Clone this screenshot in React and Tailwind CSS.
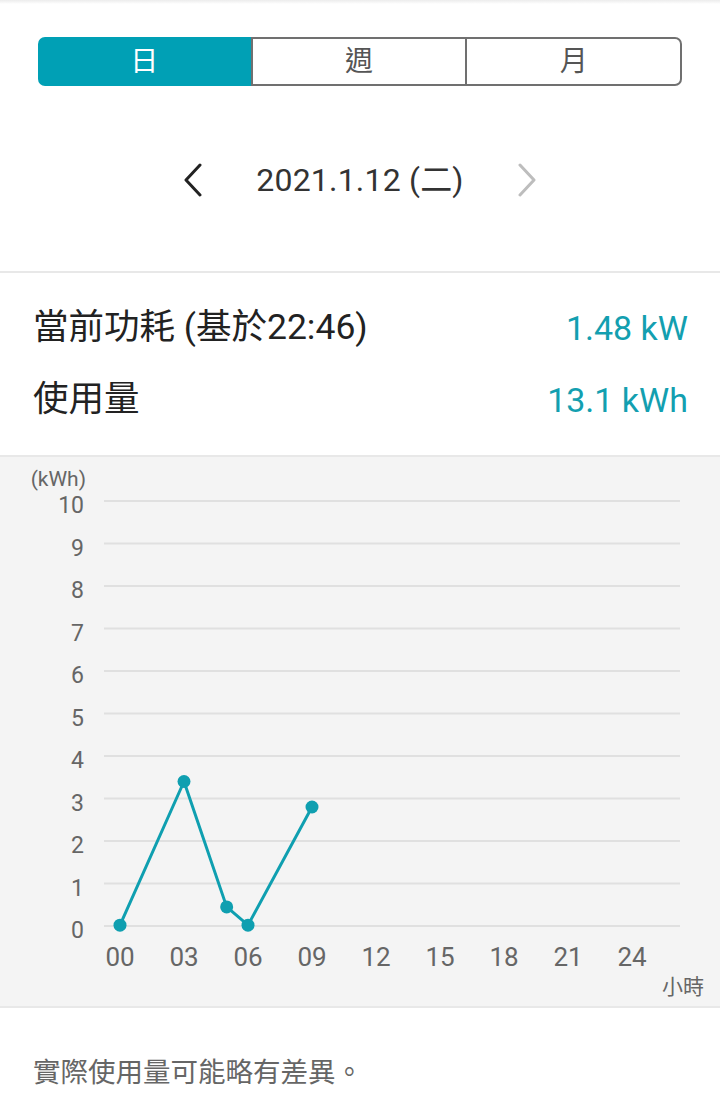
import React from 'react';

const TEAL = '#0f9fb0';

const points = [
  { h: 0, v: 0.02 },
  { h: 3, v: 3.4 },
  { h: 5, v: 0.45 },
  { h: 6, v: 0.02 },
  { h: 9, v: 2.8 },
];

const Chevron = ({ dir, color }) => (
  <svg width="22" height="34" viewBox="0 0 22 34" fill="none">
    <path
      d={dir === 'left' ? 'M18 2 L4 17 L18 32' : 'M4 2 L18 17 L4 32'}
      stroke={color}
      strokeWidth="3"
      strokeLinecap="round"
      strokeLinejoin="round"
    />
  </svg>
);

const UsageChart = () => {
  const top = 44;
  const step = 42.5;
  const y = (v) => top + (10 - v) * step;
  const x = (h) => 120 + (h * 64) / 3;
  const ticks = [10, 9, 8, 7, 6, 5, 4, 3, 2, 1, 0];
  const hours = ['00', '03', '06', '09', '12', '15', '18', '21', '24'];
  const font = "Roboto, 'Noto Sans CJK TC', sans-serif";

  return (
    <svg width="720" height="549" viewBox="0 0 720 549" className="block">
      <text x="86" y="29" textAnchor="end" fontSize="21" fill="#666" fontFamily={font}>
        (kWh)
      </text>
      {ticks.map((t) => (
        <g key={t}>
          <line x1="104" x2="680" y1={y(t)} y2={y(t)} stroke="#e0e0e0" strokeWidth="2" />
          <text x="84" y={y(t) + 12} textAnchor="end" fontSize="23" fill="#666" fontFamily={font}>
            {t}
          </text>
        </g>
      ))}
      {hours.map((h, i) => (
        <text key={h} x={120 + i * 64} y="509" textAnchor="middle" fontSize="26" fill="#666" fontFamily={font}>
          {h}
        </text>
      ))}
      <text x="704" y="537" textAnchor="end" fontSize="21" fill="#666" fontFamily={font}>
        小時
      </text>
      <polyline
        points={points.map((p) => `${x(p.h)},${y(p.v)}`).join(' ')}
        fill="none"
        stroke={TEAL}
        strokeWidth="3"
        strokeLinejoin="round"
      />
      {points.map((p) => (
        <circle key={p.h} cx={x(p.h)} cy={y(p.v)} r="6.5" fill={TEAL} />
      ))}
    </svg>
  );
};

const App = () => {
  return (
    <div
      className="w-[720px] min-h-screen bg-white text-[#222]"
      style={{ fontFamily: "Roboto, 'Noto Sans CJK TC', sans-serif" }}
    >
      {/* top shade */}
      <div className="h-[4px] bg-gradient-to-b from-[#ececec] to-white" />

      {/* period switch */}
      <div className="px-[38px] pt-[33px]">
        <div className="flex h-[49px] text-[28px]">
          <div className="flex-1 flex items-center justify-center bg-[#00a0b5] text-white rounded-l-[7px]">日</div>
          <div className="flex-1 flex items-center justify-center border-2 border-[#707070] text-[#555]">週</div>
          <div className="flex-1 flex items-center justify-center border-y-2 border-r-2 border-[#707070] rounded-r-[7px] text-[#555]">月</div>
        </div>
      </div>

      {/* date nav */}
      <div className="mt-[64px] mb-[61px] h-[60px] flex items-center justify-center gap-[52px]">
        <Chevron dir="left" color="#222" />
        <span className="text-[32px] text-[#333] tracking-[0.2px]">2021.1.12 (二)</span>
        <Chevron dir="right" color="#bdbdbd" />
      </div>

      <div className="h-[2px] bg-[#e8e8e8]" />

      {/* summary */}
      <div className="pt-[19px] pb-[19px] pr-[32px] pl-[33px]">
        <div className="h-[72px] flex items-center justify-between">
          <span className="text-[35.5px]">當前功耗 (基於22:46)</span>
          <span className="text-[34px] text-[#139fb0]">1.48 kW</span>
        </div>
        <div className="h-[72px] flex items-center justify-between">
          <span className="text-[35.5px]">使用量</span>
          <span className="text-[34px] text-[#139fb0]">13.1 kWh</span>
        </div>
      </div>

      {/* chart */}
      <div className="bg-[#f4f4f4] border-y-2 border-[#e8e8e8]">
        <UsageChart />
      </div>

      {/* footnote */}
      <div className="px-[33px] pt-[44px] pb-[40px]">
        <p className="text-[27.5px] text-[#666]">實際使用量可能略有差異。</p>
      </div>
    </div>
  );
};

export default App;
